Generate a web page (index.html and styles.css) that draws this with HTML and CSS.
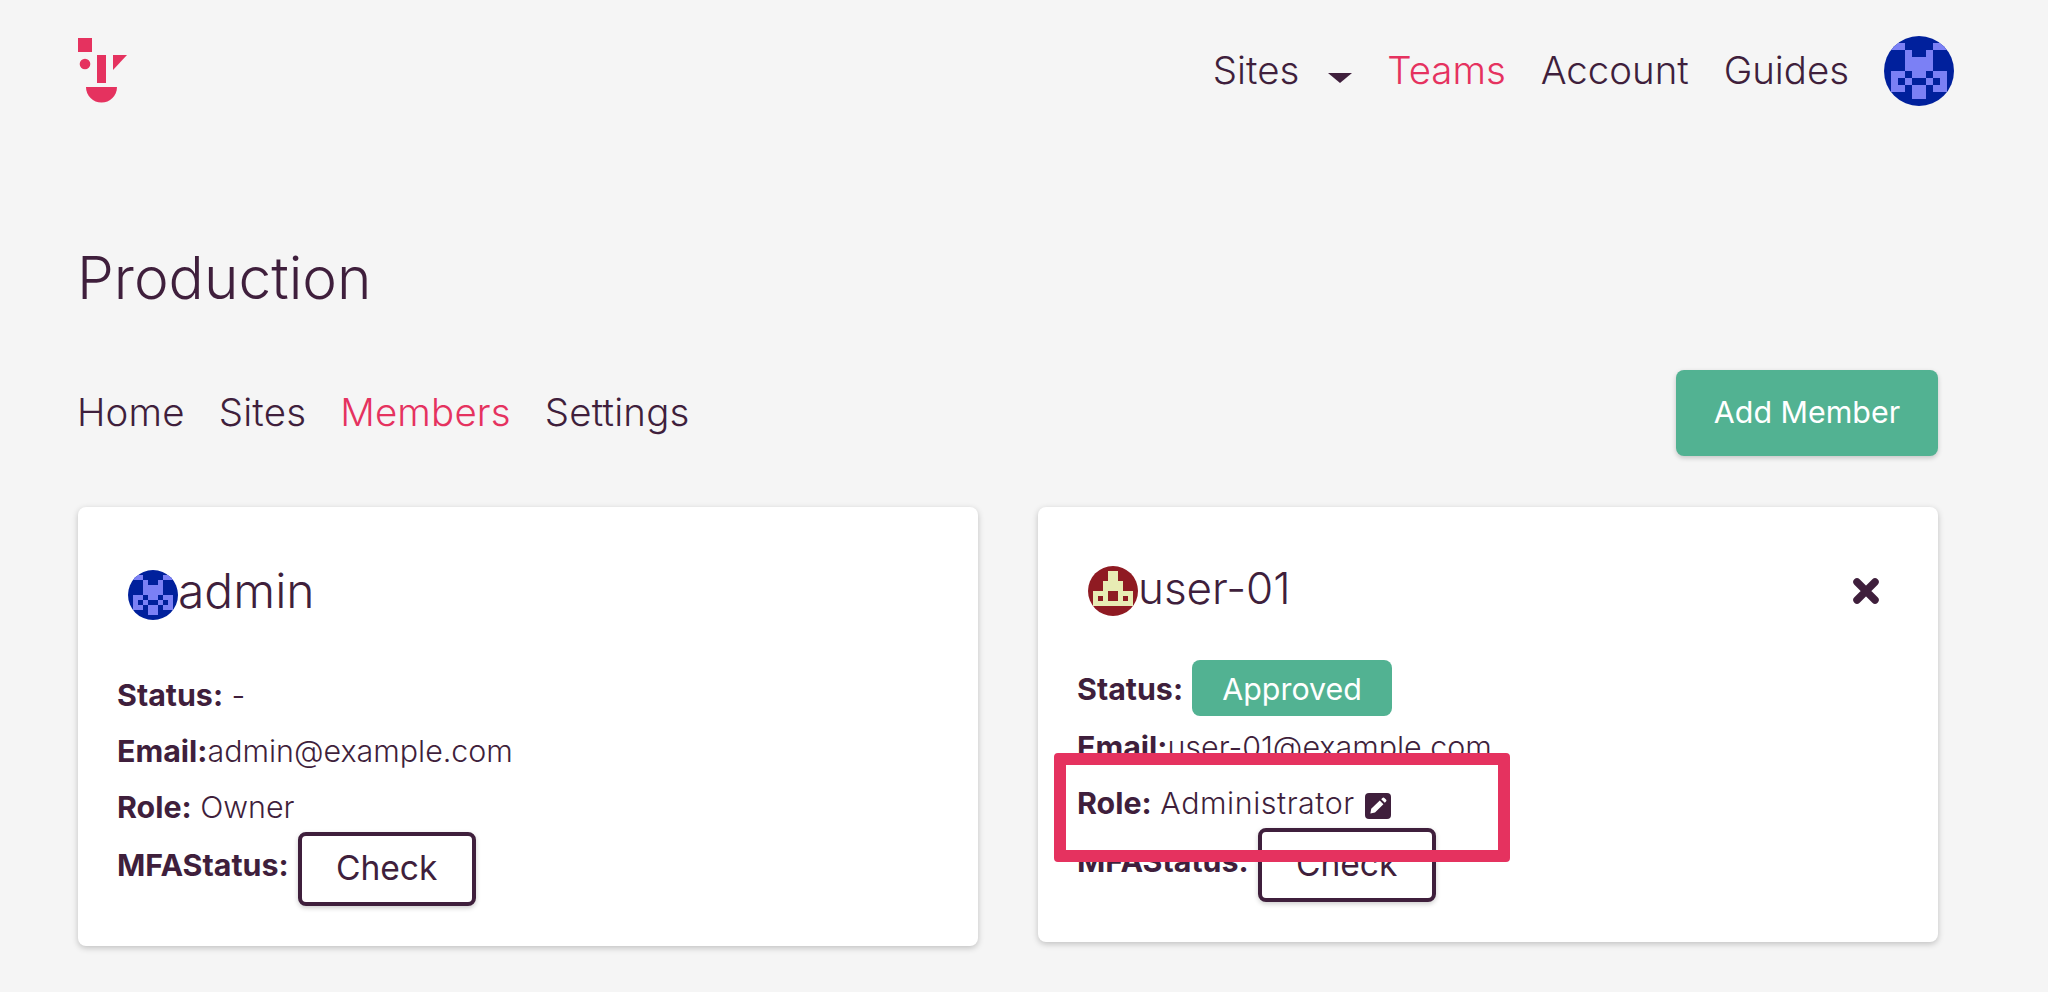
FILE: index.html
```html
<!DOCTYPE html>
<html lang="en">
<head>
<meta charset="utf-8">
<title>Production</title>
<link rel="stylesheet" href="styles.css">
</head>
<body>
<svg class="defs" width="0" height="0" aria-hidden="true">
  <defs>
    <clipPath id="round"><circle cx="5" cy="5" r="5"/></clipPath>
    <symbol id="avatar-blue" viewBox="0 0 10 10">
      <g clip-path="url(#round)">
        <rect width="10" height="10" fill="#00209c"/>
        <path fill="#7b80f5" shape-rendering="crispEdges" d="M1 1h2v1H1zM7 1h2v1H7zM3 2h1v1H3zM6 2h1v1H6zM3 3h4v2H3zM1 5h2v1H1zM4 5h2v1H4zM7 5h2v1H7zM1 6h1v1H1zM3 6h1v1H3zM6 6h1v1H6zM8 6h1v1H8zM1 7h2v1H1zM4 7h2v2H4zM7 7h2v1H7z"/>
      </g>
    </symbol>
    <symbol id="avatar-red" viewBox="0 0 10 10">
      <g clip-path="url(#round)">
        <rect width="10" height="10" fill="#8f1a22"/>
        <path fill="#e8ecb4" shape-rendering="crispEdges" d="M4 1h2v2H4zM3 3h4v2H3zM1 5h3v1H1zM6 5h3v1H6zM1 6h1v1H1zM3 6h1v1H3zM6 6h1v1H6zM8 6h1v1H8zM1 7h8v1H1z"/>
      </g>
    </symbol>
  </defs>
</svg>
<div class="page">
  <header class="header">
    <svg class="logo" viewBox="0 0 50 65" width="50" height="65" aria-label="Logo">
      <rect x="0" y="0" width="14" height="14"/>
      <circle cx="7" cy="26" r="5.3"/>
      <rect x="19" y="17" width="9" height="28"/>
      <path d="M35 17H49L35 32z"/>
      <path d="M8 49H39A15.500 15.500 0 0 1 8 49z"/>
    </svg>
    <nav class="nav">
      <a class="nav-item nav-sites">Sites<span class="caret"></span></a>
      <a class="nav-item active">Teams</a>
      <a class="nav-item">Account</a>
      <a class="nav-item">Guides</a>
      <svg class="avatar-lg"><use href="#avatar-blue"/></svg>
    </nav>
  </header>

  <h1 class="title">Production</h1>

  <div class="tabs-row">
    <div class="tabs">
      <a class="tab">Home</a>
      <a class="tab">Sites</a>
      <a class="tab active">Members</a>
      <a class="tab">Settings</a>
    </div>
    <button class="btn-add">Add Member</button>
  </div>

  <main class="cards">
    <section class="card">
      <div class="card-head">
        <svg class="avatar"><use href="#avatar-blue"/></svg>
        <span class="name">admin</span>
      </div>
      <div class="row"><b>Status:</b> -</div>
      <div class="row"><b>Email:</b>admin@example.com</div>
      <div class="row"><b>Role:</b> Owner</div>
      <div class="row-mfa"><b>MFAStatus:</b><button class="btn-check">Check</button></div>
    </section>

    <section class="card card-compact">
      <div class="card-head">
        <svg class="avatar"><use href="#avatar-red"/></svg>
        <span class="name">user-01</span>
        <svg class="close" viewBox="0 0 26 26" width="26" height="26" aria-label="Remove"><path d="M4 4L22 22M22 4L4 22"/></svg>
      </div>
      <div class="row row-status"><b>Status:</b><span class="badge">Approved</span></div>
      <div class="row"><b>Email:</b>user-01@example.com</div>
      <div class="row"><b>Role:</b> <span class="role-name">Administrator</span> <svg class="edit" viewBox="0 0 26 26" width="26" height="26" aria-label="Edit">
          <rect width="26" height="26" rx="4" fill="#3f1f3c"/>
          <path fill="#fff" d="M14.800 7.600l3.600 3.600-8.400 8.400-4.600.800.800-4.600zM16.200 6.200l1.200-1.200a1.400 1.400 0 0 1 2 0l1.600 1.600a1.400 1.400 0 0 1 0 2l-1.200 1.200z"/>
        </svg></div>
      <div class="row-mfa"><b>MFAStatus:</b><button class="btn-check">Check</button></div>
      <div class="highlight"></div>
    </section>
  </main>
</div>
</body>
</html>
```
FILE: styles.css
```css
* { box-sizing: border-box; }

html, body {
  margin: 0;
  height: 100%;
  overflow: hidden;
}

body {
  background: #f5f5f5;
  color: #3f1f3c;
  font-family: Inter, "Liberation Sans", sans-serif;
  font-weight: 300;
}

.defs { position: absolute; }

.page { padding: 36px 110px 0 78px; }

.header {
  display: flex;
  justify-content: space-between;
  align-items: flex-start;
  height: 70px;
  margin-right: -16px;
}

.logo { margin-top: 2px; fill: #e5325f; }

.nav {
  display: flex;
  align-items: center;
  gap: 35px;
  height: 70px;
  font-size: 38.400px;
  line-height: 68px;
}

.nav-item { color: #3f1f3c; height: 70px; }
.nav-item.active { color: #e5325f; }

.nav-sites {
  display: flex;
  align-items: flex-start;
}

.caret {
  width: 0;
  height: 0;
  margin: 37px 0 0 29px;
  border-style: solid;
  border-width: 10px 12px 0;
  border-color: #3f1f3c transparent transparent;
}

.avatar-lg { width: 70px; height: 70px; display: block; }
.avatar { width: 50px; height: 50px; display: block; flex: none; }

.title {
  margin: 138px 0 0 -1px;
  font-size: 58.600px;
  line-height: 68px;
  font-weight: 300;
}

.tabs-row {
  display: flex;
  justify-content: space-between;
  align-items: center;
  margin-top: 58px;
}

.tabs {
  display: flex;
  gap: 34px;
  margin: 0 0 2px -1px;
  font-size: 38.400px;
  letter-spacing: .2px;
}

.tab.active { color: #e5325f; }

.btn-add {
  width: 262px;
  height: 86px;
  padding: 0 0 3px;
  border: 0;
  border-radius: 8px;
  background: #52b292;
  color: #fff;
  font-family: inherit;
  font-size: 30.400px;
  font-weight: 400;
  box-shadow: 0 2px 5px rgba(0, 0, 0, .2);
}

.cards {
  display: grid;
  grid-template-columns: 900px 900px;
  gap: 60px;
  align-items: start;
  margin-top: 51px;
}

.card {
  position: relative;
  padding: 40px;
  background: #fff;
  border-radius: 8px;
  box-shadow: 0 2px 6px rgba(0, 0, 0, .22);
  font-size: 30.400px;
}

.card-head {
  display: flex;
  align-items: flex-start;
  height: 120px;
  padding: 23px 19px 0 10px;
}

.card-compact .card-head {
  height: 113px;
  padding-top: 19px;
}

.name {
  font-size: 48px;
  line-height: 50px;
  margin-top: -4px;
}

.card-compact .name {
  font-size: 44px;
  margin-top: -3px;
}

.close {
  margin-left: auto;
  margin-top: 12px;
  fill: none;
  stroke: #3f1f3c;
  stroke-width: 7.500;
  stroke-linecap: round;
}

.row {
  height: 56px;
  margin-left: -1px;
  line-height: 56px;
}

b { font-weight: 700; }

.role-name { letter-spacing: .55px; }

.row-status {
  display: flex;
  height: 59px;
  line-height: 58px;
}

.badge {
  width: 200px;
  height: 56px;
  margin-left: 9px;
  border-radius: 8px;
  background: #52b292;
  color: #fff;
  text-align: center;
  font-weight: 400;
}

.edit { margin-left: 2px; vertical-align: -5px; }

.row-mfa {
  display: flex;
  align-items: flex-start;
  gap: 9px;
  margin: -3px 0 0 -1px;
}

.row-mfa b { line-height: 66px; }

.btn-check {
  width: 178px;
  height: 74px;
  padding: 0 0 3px;
  border: 4px solid #3f1f3c;
  border-radius: 8px;
  background: #fff;
  color: #3f1f3c;
  font-family: inherit;
  font-size: 33.600px;
  font-weight: 400;
  box-shadow: 0 2px 5px rgba(0, 0, 0, .2);
}

.highlight {
  position: absolute;
  left: 16px;
  top: 246px;
  width: 456px;
  height: 109px;
  border: 12px solid #e5325f;
  border-radius: 4px;
}
```
